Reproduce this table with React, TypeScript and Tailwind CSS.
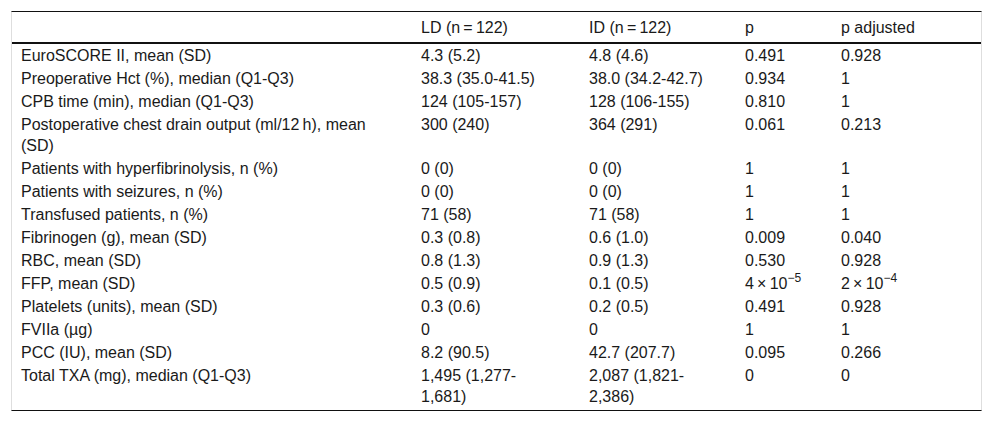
import React from 'react'

type Row = {
  label: React.ReactNode
  ld: React.ReactNode
  id: React.ReactNode
  p: React.ReactNode
  padj: React.ReactNode
}

// Exponent helper for the tiny p values
function Exp({ base, exp }: { base: string; exp: string }) {
  return (
    <span>
      {base}
      {'\u2009×\u200910'}
      <sup className="text-[12px] -top-[7px]">{exp}</sup>
    </span>
  )
}

const rows: Row[] = [
  { label: 'EuroSCORE II, mean (SD)', ld: '4.3 (5.2)', id: '4.8 (4.6)', p: '0.491', padj: '0.928' },
  { label: 'Preoperative Hct (%), median (Q1-Q3)', ld: '38.3 (35.0-41.5)', id: '38.0 (34.2-42.7)', p: '0.934', padj: '1' },
  { label: 'CPB time (min), median (Q1-Q3)', ld: '124 (105-157)', id: '128 (106-155)', p: '0.810', padj: '1' },
  {
    label: (
      <>
        Postoperative chest drain output (ml/12{'\u2009'}h), mean
        <br />
        (SD)
      </>
    ),
    ld: '300 (240)',
    id: '364 (291)',
    p: '0.061',
    padj: '0.213',
  },
  { label: 'Patients with hyperfibrinolysis, n (%)', ld: '0 (0)', id: '0 (0)', p: '1', padj: '1' },
  { label: 'Patients with seizures, n (%)', ld: '0 (0)', id: '0 (0)', p: '1', padj: '1' },
  { label: 'Transfused patients, n (%)', ld: '71 (58)', id: '71 (58)', p: '1', padj: '1' },
  { label: 'Fibrinogen (g), mean (SD)', ld: '0.3 (0.8)', id: '0.6 (1.0)', p: '0.009', padj: '0.040' },
  { label: 'RBC, mean (SD)', ld: '0.8 (1.3)', id: '0.9 (1.3)', p: '0.530', padj: '0.928' },
  {
    label: 'FFP, mean (SD)',
    ld: '0.5 (0.9)',
    id: '0.1 (0.5)',
    p: <Exp base="4" exp="−5" />,
    padj: <Exp base="2" exp="−4" />,
  },
  { label: 'Platelets (units), mean (SD)', ld: '0.3 (0.6)', id: '0.2 (0.5)', p: '0.491', padj: '0.928' },
  { label: 'FVIIa (µg)', ld: '0', id: '0', p: '1', padj: '1' },
  { label: 'PCC (IU), mean (SD)', ld: '8.2 (90.5)', id: '42.7 (207.7)', p: '0.095', padj: '0.266' },
  {
    label: 'Total TXA (mg), median (Q1-Q3)',
    ld: (
      <>
        1,495 (1,277-
        <br />
        1,681)
      </>
    ),
    id: (
      <>
        2,087 (1,821-
        <br />
        2,386)
      </>
    ),
    p: '0',
    padj: '0',
  },
]

const cols = 'grid grid-cols-[399px_168px_156px_96px_150px]'

function App() {
  return (
    <div className="min-h-screen bg-white pl-[11px] pt-[11px] font-['Liberation_Sans',Arial,sans-serif] text-[16px] text-[#1a1a1a]">
      <div className="w-[971px] border-x border-x-[#dedede] border-t border-t-[#111] border-b border-b-[#111] pb-[2px]">
        {/* header */}
        <div className={`${cols} border-b-2 border-b-[#111] pt-[5px] pb-[4px] leading-[21px]`}>
          <div className="pl-[9px]" />
          <div className="pl-[10px]">LD (n{'\u2009=\u2009'}122)</div>
          <div className="pl-[10px]">ID (n{'\u2009=\u2009'}122)</div>
          <div className="pl-[10px]">p</div>
          <div className="pl-[10px]">p adjusted</div>
        </div>

        {/* body */}
        {rows.map((r, i) => (
          <div key={i} className={`${cols} py-[1px] leading-[21px]`}>
            <div className="pl-[9px]">{r.label}</div>
            <div className="pl-[10px]">{r.ld}</div>
            <div className="pl-[10px]">{r.id}</div>
            <div className="pl-[10px]">{r.p}</div>
            <div className="pl-[10px]">{r.padj}</div>
          </div>
        ))}
      </div>
    </div>
  )
}

export default App
